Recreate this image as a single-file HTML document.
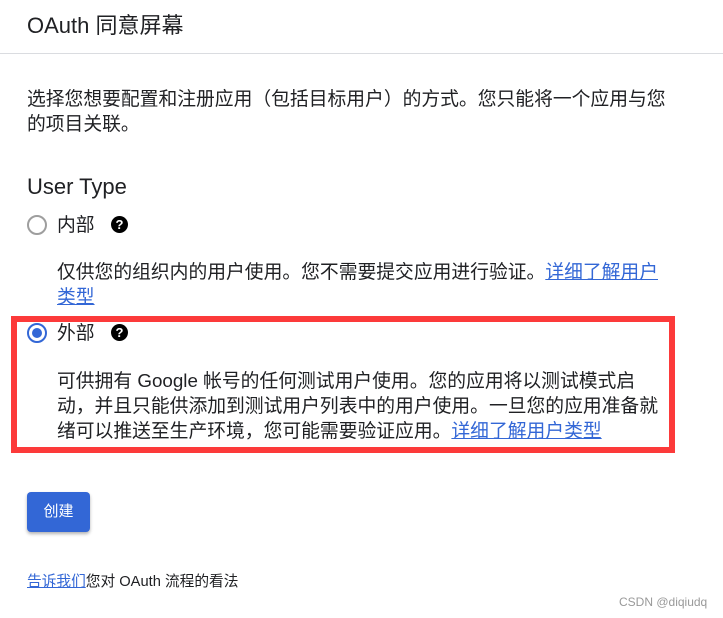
<!DOCTYPE html>
<html><head><meta charset="utf-8"><style>
body{margin:0;width:723px;height:618px;background:#fff;font-family:"Liberation Sans","Noto Sans CJK SC",sans-serif;color:#202124;position:relative;overflow:hidden}
.a{position:absolute;white-space:nowrap}
.t{font-size:18.8px;line-height:25px}
a{color:#3367d6;text-decoration:underline}
.help{display:inline-block;width:17px;height:17px;border-radius:50%;background:#000;color:#fff;font-size:13px;font-weight:bold;text-align:center;line-height:17px}
.radio{position:absolute;width:16px;height:16px;border:2px solid #9e9e9e;border-radius:50%}
</style></head><body>
<div class="a" style="left:27px;top:11px;font-size:22px;line-height:30px">OAuth 同意屏幕</div>
<div class="a" style="left:0;top:53px;width:723px;height:1px;background:#dadce0"></div>
<div class="a t" style="left:27px;top:86px">选择您想要配置和注册应用（包括目标用户）的方式。您只能将一个应用与您<br>的项目关联。</div>
<div class="a" style="left:27px;top:172px;font-size:22px;line-height:30px">User Type</div>
<div class="radio" style="left:27px;top:215px"></div>
<div class="a t" style="left:57px;top:212px">内部</div>
<div class="a help" style="left:111px;top:216px">?</div>
<div class="a t" style="left:57px;top:259px">仅供您的组织内的用户使用。您不需要提交应用进行验证。<a>详细了解用户</a><br><a>类型</a></div>
<div class="a" style="left:11px;top:316px;width:652px;height:125px;border:6px solid #fc3a3a"></div>
<div class="radio" style="left:27px;top:323px;border-color:#3367d6"><div style="position:absolute;left:3px;top:3px;width:10px;height:10px;border-radius:50%;background:#3367d6"></div></div>
<div class="a t" style="left:57px;top:320px">外部</div>
<div class="a help" style="left:111px;top:324px">?</div>
<div class="a t" style="left:57px;top:368px">可供拥有 Google 帐号的任何测试用户使用。您的应用将以测试模式启<br>动，并且只能供添加到测试用户列表中的用户使用。一旦您的应用准备就<br>绪可以推送至生产环境，您可能需要验证应用。<a>详细了解用户类型</a></div>
<div class="a" style="left:27px;top:492px;width:63px;height:40px;background:#3367d6;border-radius:4px;box-shadow:0 2px 3px rgba(0,0,0,.3);color:#fff;font-size:15px;line-height:40px;text-align:center">创建</div>
<div class="a" style="left:27px;top:572px;font-size:14.7px;line-height:20px"><a>告诉我们</a>您对 OAuth 流程的看法</div>
<div class="a" style="left:619px;top:595px;font-size:12px;color:#999">CSDN @diqiudq</div>
</body></html>
